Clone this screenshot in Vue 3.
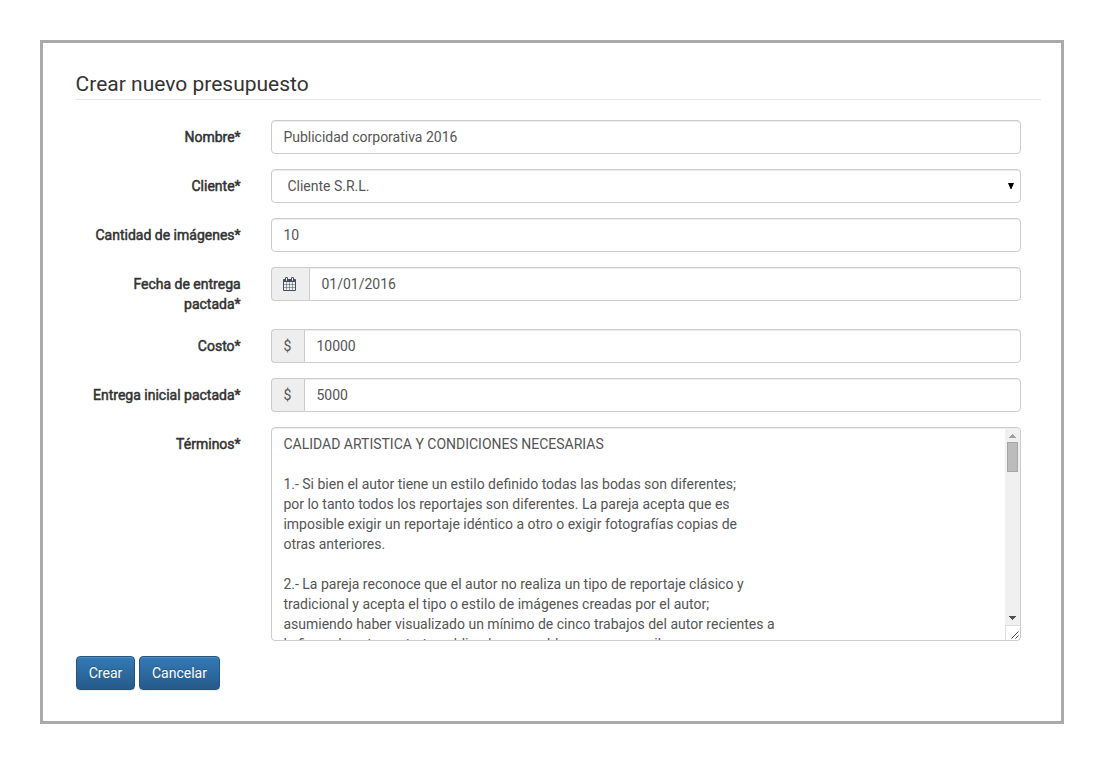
<script setup>
import { ref } from 'vue'

const fields = [
  { id: 'nombre', label: 'Nombre*', value: 'Publicidad corporativa 2016', type: 'text' },
  { id: 'cliente', label: 'Cliente*', value: 'Cliente S.R.L.', type: 'select' },
  { id: 'cantidad', label: 'Cantidad de imágenes*', value: '10', type: 'text' },
  { id: 'fecha', label: 'Fecha de entrega pactada*', value: '01/01/2016', type: 'date' },
  { id: 'costo', label: 'Costo*', value: '10000', type: 'money' },
  { id: 'entrega', label: 'Entrega inicial pactada*', value: '5000', type: 'money' },
]

const terms = ref(`CALIDAD ARTISTICA Y CONDICIONES NECESARIAS

1.- Si bien el autor tiene un estilo definido todas las bodas son diferentes;
por lo tanto todos los reportajes son diferentes. La pareja acepta que es
imposible exigir un reportaje idéntico a otro o exigir fotografías copias de
otras anteriores.

2.- La pareja reconoce que el autor no realiza un tipo de reportaje clásico y
tradicional y acepta el tipo o estilo de imágenes creadas por el autor;
asumiendo haber visualizado un mínimo de cinco trabajos del autor recientes a
la firma de este contrato publicados en su blog, www o email.`)
</script>

<template>
  <main class="panel">
    <h1>Crear nuevo presupuesto</h1>
    <form @submit.prevent>
      <div v-for="f in fields" :key="f.id" class="row">
        <label :for="f.id">{{ f.label }}</label>
        <div class="group">
          <span v-if="f.type === 'date'" class="addon calendar">
            <svg width="13" height="14" viewBox="0 0 1664 1792">
              <path fill="#46505c" d="M128 1664h288v-288h-288v288zm352 0h320v-288h-320v288zm-352-352h288v-320h-288v320zm352 0h320v-320h-320v320zm-352-384h288v-288h-288v288zm736 736h320v-288h-320v288zm-384-736h320v-288h-320v288zm768 736h288v-288h-288v288zm-384-352h320v-320h-320v320zm-352-864v-288q0-13-9.500-22.500t-22.500-9.500h-64q-13 0-22.500 9.500t-9.500 22.500v288q0 13 9.500 22.500t22.500 9.500h64q13 0 22.500-9.500t9.500-22.500zm736 864h288v-320h-288v320zm-384-384h320v-288h-320v288zm384 0h288v-288h-288v288zm32-480v-288q0-13-9.500-22.500t-22.500-9.500h-64q-13 0-22.500 9.500t-9.500 22.500v288q0 13 9.500 22.500t22.500 9.500h64q13 0 22.500-9.500t9.500-22.500zm384-64v1280q0 52-38 90t-90 38h-1408q-52 0-90-38t-38-90v-1280q0-52 38-90t90-38h128v-96q0-66 47-113t113-47h64q66 0 113 47t47 113v96h384v-96q0-66 47-113t113-47h64q66 0 113 47t47 113v96h128q52 0 90 38t38 90z" />
            </svg>
          </span>
          <span v-if="f.type === 'money'" class="addon">$</span>
          <div v-if="f.type === 'select'" class="control select">
            <span>{{ f.value }}</span>
            <svg width="6" height="6" viewBox="0 0 6 6"><path d="M0 0h6L3.500 6h-1z" /></svg>
          </div>
          <input v-else :id="f.id" class="control" type="text" :value="f.value" />
        </div>
      </div>
      <div class="row terms">
        <label>Términos*</label>
        <div class="area">
          <div class="text">{{ terms }}</div>
          <div class="side">
            <div class="track">
              <svg class="up" width="7" height="4" viewBox="0 0 7 4" shape-rendering="crispEdges"><path fill="#a0a0a0" d="M3 0h1v1h1v1h1v1h1v1H0V3h1V2h1V1h1z" /></svg>
              <div class="thumb"></div>
              <svg class="down" width="7" height="4" viewBox="0 0 7 4" shape-rendering="crispEdges"><path fill="#505050" d="M0 0h7v1H6v1H5v1H4v1H3V3H2V2H1V1H0z" /></svg>
            </div>
            <div class="grip">
              <svg width="8" height="8" viewBox="0 0 8 8"><path stroke="#444" stroke-width="1" d="M.5 7.500l7-7M4.500 7.500l3-3" /></svg>
            </div>
          </div>
        </div>
      </div>
      <div class="actions">
        <button type="submit">Crear</button>
        <button type="button">Cancelar</button>
      </div>
    </form>
  </main>
</template>

<style>
body { background: #fff; }
</style>

<style scoped>
.panel, .panel * { box-sizing: border-box; }
.panel {
  width: 1024px;
  height: 684px;
  margin: 40px;
  padding: 30px 20px 0 33px;
  border: 3px solid #aaa;
  font: 14px/20px Roboto, sans-serif;
  color: #333;
}
h1 {
  margin: 0 0 20px;
  height: 27px;
  border-bottom: 1px solid #e5e5e5;
  font-size: 21px;
  font-weight: 400;
  line-height: 23px;
  text-indent: -.4px;
}
.row { display: flex; gap: 30px; padding-right: 20px; margin-bottom: 15px; }
label {
  width: 165px;
  flex: none;
  padding: 7px .4px 0 0;
  text-align: right;
  -webkit-text-stroke: .5px #333;
}
.group { display: flex; flex: 1; height: 34px; }
.control {
  flex: 1;
  min-width: 0;
  height: 34px;
  padding: 6px 12px 6px 11.4px;
  border: 1px solid #ccc;
  border-radius: 4px;
  outline: 0;
  background: #fff;
  box-shadow: inset 0 1px 1px rgba(0, 0, 0, .075);
  font: inherit;
  color: #555;
}
.select { display: flex; align-items: center; justify-content: space-between; padding: 6px 6px 6px 15.4px; }
.addon {
  display: flex;
  align-items: center;
  justify-content: center;
  width: 33px;
  padding-right: 1px;
  border: 1px solid #ccc;
  border-right: 0;
  border-radius: 4px 0 0 4px;
  background: #eee;
  color: #555;
}
.calendar { width: 38px; padding-right: 2px; }
.addon + .control { border-radius: 0 4px 4px 0; }
.area {
  display: flex;
  flex: 1;
  height: 214px;
  border: 1px solid #ccc;
  border-radius: 4px;
  overflow: hidden;
  box-shadow: inset 0 1px 1px rgba(0, 0, 0, .075);
  color: #555;
}
.text { flex: 1; height: 212px; padding: 6px 12px 6px 11.4px; white-space: pre; overflow: hidden; }
.side { display: flex; flex-direction: column; width: 15px; padding-top: 1px; }
.track { display: flex; flex-direction: column; align-items: center; flex: 1; background: #f0f0f0; }
.up { margin-top: 5px; flex: none; }
.thumb { width: 11px; height: 30px; margin-top: 4px; border: 1px solid #a6a6a6; background: #bcbcbc; }
.down { margin-top: auto; margin-bottom: 5px; flex: none; }
.grip { display: flex; align-items: flex-end; justify-content: flex-end; height: 15px; padding: 0 1px 1px 0; border: solid #ddd; border-width: 1px 0 0 1px; }
.grip svg { fill: none; }
.actions { display: flex; gap: 4px; }
button {
  width: 59px;
  height: 34px;
  padding: 6px 0;
  border: 1px solid #245580;
  border-radius: 4px;
  background: linear-gradient(#337ab7, #265a88);
  box-shadow: inset 0 1px 0 rgba(255, 255, 255, .15), 0 1px 1px rgba(0, 0, 0, .075);
  font: inherit;
  color: #fff;
  text-shadow: 0 -1px 0 rgba(0, 0, 0, .2);
}
button + button { width: 81px; }
</style>
